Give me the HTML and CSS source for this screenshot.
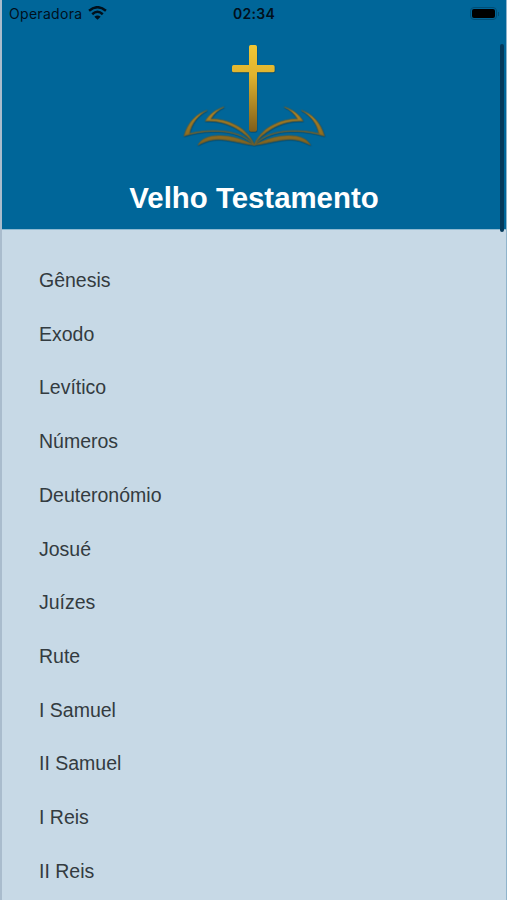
FILE: index.html
```html
<!DOCTYPE html>
<html lang="pt">
<head>
    <meta charset="utf-8">
    <meta name="viewport" content="width=device-width, initial-scale=1">
    <title>Velho Testamento</title>
    <link rel="stylesheet" href="styles.css">
</head>
<body>
    <div class="screen">
        <header class="header">
            <div class="status-bar">
                <div class="carrier">
                    <span>Operadora</span>
                    <svg class="wifi" viewBox="0 0 54 39">
                        <path d="M3 13 Q27 -7 51 13" fill="none" stroke="#00101c" stroke-width="7"/>
                        <path d="M12 23 Q27 9 42 23" fill="none" stroke="#00101c" stroke-width="7"/>
                        <path d="M27 39 L18 30 Q27 23 36 30 Z" fill="#00101c"/>
                    </svg>
                </div>
                <span class="time">02:34</span>
                <div class="battery"><div class="battery-level"></div></div>
            </div>

            <svg class="logo" viewBox="0 0 480 360">
                <defs>
                    <linearGradient id="gold" gradientUnits="userSpaceOnUse" x1="0" y1="30" x2="0" y2="290">
                        <stop offset="0" stop-color="#f0c735"/>
                        <stop offset="0.35" stop-color="#dfb32e"/>
                        <stop offset="1" stop-color="#805e1b"/>
                    </linearGradient>
                    <linearGradient id="page" gradientUnits="userSpaceOnUse" x1="0" y1="215" x2="0" y2="330">
                        <stop offset="0" stop-color="#b58b27"/>
                        <stop offset="1" stop-color="#80621f"/>
                    </linearGradient>
                    <g id="half">
                        <path d="M96 226 C66 235 38 261 27 303 C75 287 142 282 188 299 C207 306 224 317 237 330 C217 305 181 292 147 289 C112 285 76 288 43 296 C49 266 67 242 96 226 Z"/>
                        <path d="M147 216 C122 224 103 238 91 258 C126 256 158 265 185 281 C207 294 224 309 237 328 C225 300 203 280 179 269 C156 257 130 252 107 252 C117 236 130 224 147 216 Z"/>
                        <path d="M69 330 C81 306 115 299 149 303 C185 306 212 318 237 330 C207 327 183 319 154 315 C124 310 98 314 69 330 Z"/>
                    </g>
                </defs>
                <g class="shadow">
                    <g fill="url(#page)" stroke="#7a6226" stroke-width="2">
                        <use href="#half"/>
                        <use href="#half" transform="translate(475 0) scale(-1 1)"/>
                    </g>
                    <path fill="url(#gold)" d="M227 30 H241 Q246 30 246 35 V90 H294 Q299 90 299 95 V107 Q299 112 294 112 H246 V284 Q246 290 240 290 H228 Q222 290 222 284 V112 H176 Q171 112 171 107 V95 Q171 90 176 90 H222 V35 Q222 30 227 30 Z"/>
                </g>
            </svg>

            <h1 class="title">Velho Testamento</h1>
        </header>

        <ul class="books">
            <li>Gênesis</li>
            <li>Exodo</li>
            <li>Levítico</li>
            <li>Números</li>
            <li>Deuteronómio</li>
            <li>Josué</li>
            <li>Juízes</li>
            <li>Rute</li>
            <li>I Samuel</li>
            <li>II Samuel</li>
            <li>I Reis</li>
            <li>II Reis</li>
        </ul>

        <div class="scrollbar"></div>
    </div>
</body>
</html>
```
FILE: styles.css
```css
* {
    box-sizing: border-box;
}

body {
    margin: 0;
    font-family: "Liberation Sans", Arial, sans-serif;
}

.screen {
    position: relative;
    height: 900px;
    overflow: hidden;
    background: #c7d9e6;
    border-left: 2px solid #a9bccd;
    border-right: 1px solid #8fb4cc;
}

.header {
    display: flex;
    flex-direction: column;
    align-items: center;
    height: 230px;
    background: #006699;
    border-bottom: 1px solid #8dbad2;
}

.status-bar {
    display: grid;
    grid-template-columns: 1fr auto 1fr;
    align-items: center;
    width: 100%;
    height: 26px;
    padding: 0 7px;
    color: #00101c;
    font-family: Inter, "Liberation Sans", sans-serif;
    font-size: 14px;
}

.carrier {
    display: flex;
    align-items: center;
    gap: 6px;
    letter-spacing: 0.3px;
}

.wifi {
    width: 19px;
    height: 14px;
}

.time {
    font-weight: 600;
    letter-spacing: 0.3px;
}

.battery {
    position: relative;
    justify-self: end;
    width: 27px;
    height: 13px;
    margin-right: 2px;
    padding: 1px;
    border: 1px solid #004e76;
    border-radius: 4px;
}

.battery::after {
    content: "";
    position: absolute;
    top: 4px;
    right: -3px;
    width: 1px;
    height: 4px;
    background: #004e76;
}

.battery-level {
    height: 100%;
    background: #000;
    border-radius: 2px;
}

.logo {
    width: 160px;
    height: 120px;
    margin-top: 9px;
    margin-left: 2px;
}

.shadow {
    filter: drop-shadow(1px 2px 2px rgba(0, 30, 50, 0.5));
}

.title {
    margin: 26px 0 0;
    color: #fff;
    font-size: 29.4px;
    line-height: 34px;
}

.books {
    margin: 0;
    padding: 24px 37px 0;
    list-style: none;
}

.books li {
    height: 53.73px;
    color: #333b40;
    font-size: 19.5px;
    line-height: 53.73px;
}

.scrollbar {
    position: absolute;
    top: 44px;
    right: 2px;
    width: 4px;
    height: 188px;
    background: #043a5c;
    border-radius: 2px;
}
```
